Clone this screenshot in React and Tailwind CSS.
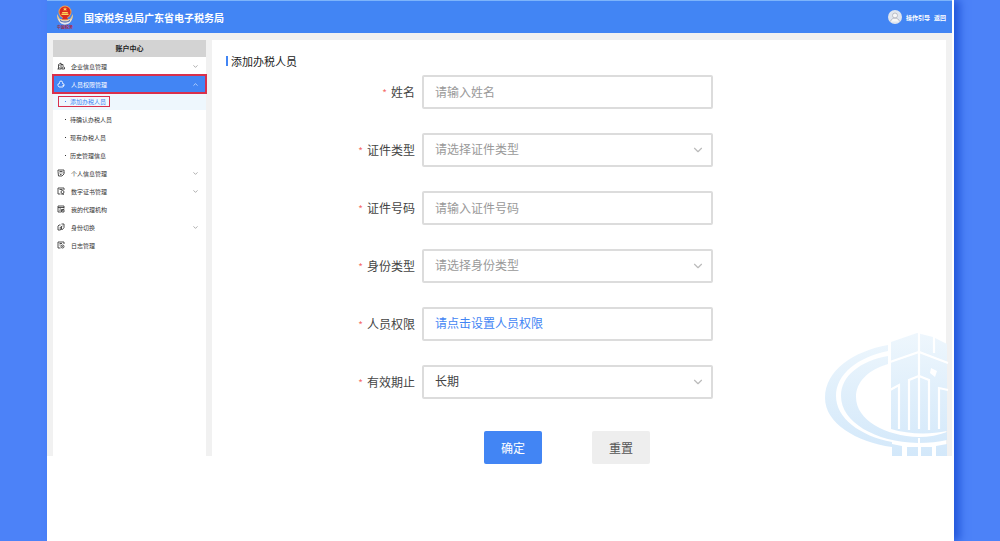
import { ChevronDown, ChevronUp } from 'lucide-react';

const icons = {
  company: (
    <>
      <path d="M3 14V5l5-3v12M8 5h4v3M1 14h8" />
      <path d="M5 7v1M5 10v1" />
      <path d="M10 14v-2a2 2 0 0 1 5 0v2z" />
    </>
  ),
  people: (
    <>
      <path d="M5 7V5a3 3 0 0 1 6 0v2" />
      <path d="M5 7 2 8v3l2 3h8l2-3V8l-3-1" />
      <path d="M11 11h3" />
    </>
  ),
  personal: (
    <>
      <path d="M14 8V2H2v3l1 9h7l4-4V7" />
      <path d="M5 5h6M5 8h2M9 8h2M6 11h3" />
    </>
  ),
  cert: (
    <>
      <path d="M14 6V2H2v12h5" />
      <path d="M5 5h6" />
      <circle cx="11" cy="10" r="3" />
      <path d="M10 13v2l1-1 2 1v-2" />
    </>
  ),
  agency: (
    <>
      <path d="M14 7V2H2v12h6" />
      <path d="M2 5h12M5 8h3M5 11h2" />
      <path d="M9 9h5v5H9zM10 12l3-2" />
    </>
  ),
  identity: (
    <>
      <path d="M7 4H4L2 6v8h5l1-4" />
      <path d="M9 2h5v7l-3 4H9V7" />
      <path d="m5 10 6-4" />
    </>
  ),
  log: (
    <>
      <path d="M14 6V2H2v12h5" />
      <path d="M5 5h5M5 8h2" />
      <circle cx="11" cy="11" r="3" />
      <path d="M11 10v1h1" />
    </>
  ),
};

const menu = [
  { label: '企业信息管理', icon: 'company', expandable: true },
  {
    label: '人员权限管理',
    icon: 'people',
    expandable: true,
    open: true,
    children: ['添加办税人员', '待确认办税人员', '现有办税人员', '历史管理信息'],
  },
  { label: '个人信息管理', icon: 'personal', expandable: true },
  { label: '数字证书管理', icon: 'cert', expandable: true },
  { label: '我的代理机构', icon: 'agency' },
  { label: '身份切换', icon: 'identity', expandable: true },
  { label: '日志管理', icon: 'log' },
];

const fields = [
  { id: 'name', label: '姓名', placeholder: '请输入姓名' },
  { id: 'idType', label: '证件类型', options: ['请选择证件类型'], tone: 'text-[#999999]' },
  { id: 'idNumber', label: '证件号码', placeholder: '请输入证件号码' },
  { id: 'role', label: '身份类型', options: ['请选择身份类型'], tone: 'text-[#999999]' },
  { id: 'permission', label: '人员权限', action: '请点击设置人员权限' },
  { id: 'validUntil', label: '有效期止', options: ['长期'], tone: 'text-[#444444]' },
];

const Emblem = () => (
  <div className="flex w-[18px] flex-col items-center">
    <svg viewBox="0 0 36 40" className="h-5 w-[18px]">
      <path d="M2 18C1 32 10 38 18 39c8-1 17-7 16-21l-6 10H8z" fill="#e3c48a" />
      <path d="M4 27c7 6 21 6 28 0l-4 8c-5 5-15 5-20 0z" fill="#e2e6f2" />
      <path d="M8 31c6 4 14 4 20 0" fill="none" stroke="#35549e" strokeWidth="2" />
      <circle cx="18" cy="14" r="13" fill="#f0a04d" />
      <circle cx="18" cy="14" r="11" fill="#d92b20" />
      <path d="m18 4 1 3h3l-2 2 1 3-3-2-3 2 1-3-2-2h3z" fill="#ffd95a" />
      <path d="M11 18h14v2H11zM13 14h10l2 3H11z" fill="#ffd95a" />
      <path d="M14 24h8l2 5H12z" fill="#d92b20" />
    </svg>
    <span className="whitespace-nowrap text-[4px] font-bold leading-[4px] text-[#a32c4c]">中国税务</span>
  </div>
);

const Watermark = () => (
  <svg
    viewBox="0 0 128 126"
    className="pointer-events-none absolute bottom-0 -right-1.5 h-[126px] w-32"
    aria-hidden="true"
  >
    <defs>
      <linearGradient id="fade" gradientUnits="userSpaceOnUse" x1="0" y1="0" x2="0" y2="126">
        <stop offset="0" stopColor="#eff7fd" />
        <stop offset="0.5" stopColor="#e0effb" />
        <stop offset="1" stopColor="#d3e8fa" />
      </linearGradient>
    </defs>
    <g fill="url(#fade)">
      {/* outer and inner rings */}
      <path d="M64 15C30 21 1 40 1 68c0 25 31 44 67 49v-5C36 106 12 88 12 66c0-22 22-39 52-45z" />
      <path d="M64 26C36 31 17 46 17 66c0 26 34 46 77 47 11 0 21-1 29-3v-8c-8 3-18 5-28 5C61 106 32 90 32 67c0-15 12-27 32-33z" />
      {/* tower */}
      <path d="M67 12 93 3l16 4 14 7v87c-18 4-40 3-56-2z" />
      {/* base */}
      <path d="M68 114l10 2v10H68zM83 117h11v9H83zM97 117h11v9H97zM112 116l11-2v12h-11z" />
    </g>
    <g fill="none" stroke="#ffffff" strokeWidth="2.2">
      <path d="M95 2v97M110 6v17" />
      <path d="M66 32 95 22l29 11" />
      <path d="M66 60l9-5v44" />
      <path d="M85 100V50l10-4 10 4v50" />
      <path d="M115 99V58l9 2" />
    </g>
    <path d="M95 108v18" stroke="#ffffff" strokeWidth="2" />
    <path d="m107 38 6 3-2 6-5-4z" fill="#ffffff" />
  </svg>
);

const MenuIcon = ({ name }) => (
  <svg
    viewBox="0 0 16 16"
    className="size-2 shrink-0"
    fill="none"
    stroke="currentColor"
    strokeWidth="1.7"
    aria-hidden="true"
  >
    {icons[name]}
  </svg>
);

const Sidebar = () => (
  <aside className="w-[153px] shrink-0 bg-white text-[6px] text-[#333333]">
    <h2 className="flex h-[17px] items-center justify-center bg-[#d3d3d3] text-[7px] font-bold text-[#222222]">
      账户中心
    </h2>
    <ul>
      {menu.map((item) => (
        <li key={item.label}>
          <button
            type="button"
            className={`flex h-[18px] w-full items-center gap-1.5 pl-1 pr-[7px] text-left ${
              item.open ? 'bg-[#4285f4] text-white outline-2 -outline-offset-1 outline-[#d9304c]' : ''
            }`}
          >
            <MenuIcon name={item.icon} />
            <span className="flex-1">{item.label}</span>
            {item.expandable &&
              (item.open ? (
                <ChevronUp className="size-[7px]" />
              ) : (
                <ChevronDown className="size-[7px] text-[#777777]" />
              ))}
          </button>
          {item.children && (
            <ul className="flex flex-col gap-px">
              {item.children.map((child, i) => (
                <li
                  key={child}
                  className={`flex h-[17px] items-center pl-[5px] ${i === 0 ? 'bg-[#eef7fd]' : ''}`}
                >
                  <a
                    href="#"
                    className={`flex h-[11px] items-center gap-1 border pl-1.5 pr-[3px] ${
                      i === 0 ? 'border-[#d9304c] text-[#4285f4]' : 'border-transparent'
                    }`}
                  >
                    <span className="size-px bg-current" />
                    {child}
                  </a>
                </li>
              ))}
            </ul>
          )}
        </li>
      ))}
    </ul>
  </aside>
);

const boxClass =
  'h-[34px] w-full rounded-xs border-2 border-[#dcdcdc] bg-white px-[11px] pb-0.5 text-left text-[12px] outline-none';

const Field = ({ field }) => (
  <div className="flex items-center gap-[7px]">
    <label
      htmlFor={field.id}
      className="flex w-[203px] shrink-0 items-center justify-end gap-1 text-[12px] text-[#444444]"
    >
      <span className="text-[10px] text-[#f56c6c]">*</span>
      {field.label}
    </label>
    <div className="relative w-full max-w-[291px]">
      {field.placeholder && (
        <input
          id={field.id}
          type="text"
          placeholder={field.placeholder}
          className={`${boxClass} placeholder:text-[#999999]`}
        />
      )}
      {field.action && (
        <button id={field.id} type="button" className={`${boxClass} text-[#4285f4]`}>
          {field.action}
        </button>
      )}
      {field.options && (
        <>
          <select id={field.id} className={`${boxClass} appearance-none ${field.tone}`}>
            {field.options.map((option) => (
              <option key={option}>{option}</option>
            ))}
          </select>
          <ChevronDown
            className="pointer-events-none absolute right-2 top-2.5 size-3.5 text-[#bbbbbb]"
            strokeWidth={2}
          />
        </>
      )}
    </div>
  </div>
);

const App = () => (
  <div className="flex min-h-screen bg-[#4c82f8] pl-[47px] pr-[46px] font-['Noto_Sans_CJK_SC',sans-serif]">
    <div className="min-w-0 flex-1 bg-white pr-0.5 shadow-[6px_0_8px_#2559db]">
      <header className="flex h-[33px] items-center justify-between border-t border-[#7db4fb] bg-[#4285f4] pl-[9px] pr-1.5 text-white">
        <div className="flex items-center gap-2.5">
          <Emblem />
          <h1 className="text-[10px] font-bold">国家税务总局广东省电子税务局</h1>
        </div>
        <div className="flex items-center gap-1 text-[6px] font-bold">
          <svg viewBox="0 0 28 28" className="size-3.5" aria-hidden="true">
            <circle cx="14" cy="14" r="14" fill="#dfe5ee" />
            <circle cx="14" cy="11" r="5" fill="#f7f7f7" stroke="#a9acb8" strokeWidth="1.5" />
            <path d="M5 23c2-9 16-9 18 0" fill="#f7f7f7" stroke="#a9acb8" strokeWidth="1.5" />
          </svg>
          <a href="#">操作引导</a>
          <a href="#">返回</a>
        </div>
      </header>

      <div className="flex gap-1.5 bg-[#f1f1f1] px-1.5 pt-[7px]">
        <Sidebar />
        <main className="relative min-w-0 flex-1 bg-white pt-[15px]">
          <Watermark />
          <h2 className="ml-3.5 flex h-3 items-center gap-[3px] text-[11px] text-[#222222]">
            <span className="h-2.5 w-0.5 bg-[#4285f4]" />
            添加办税人员
          </h2>

          {/* the button row hangs over the bottom edge of the panel */}
          <form className="relative mt-2 -mb-2">
            <div className="flex flex-col gap-6">
              {fields.map((field) => (
                <Field key={field.id} field={field} />
              ))}
            </div>
            <div className="mt-8 flex gap-[50px] pl-[272px] text-[12px]">
              <button type="button" className="h-[33px] w-[58px] rounded-xs bg-[#4285f4] text-white">
                确定
              </button>
              <button type="reset" className="h-[33px] w-[58px] rounded-xs bg-[#eeeeee] text-[#555555]">
                重置
              </button>
            </div>
          </form>
        </main>
      </div>
    </div>
  </div>
);

export default App;
